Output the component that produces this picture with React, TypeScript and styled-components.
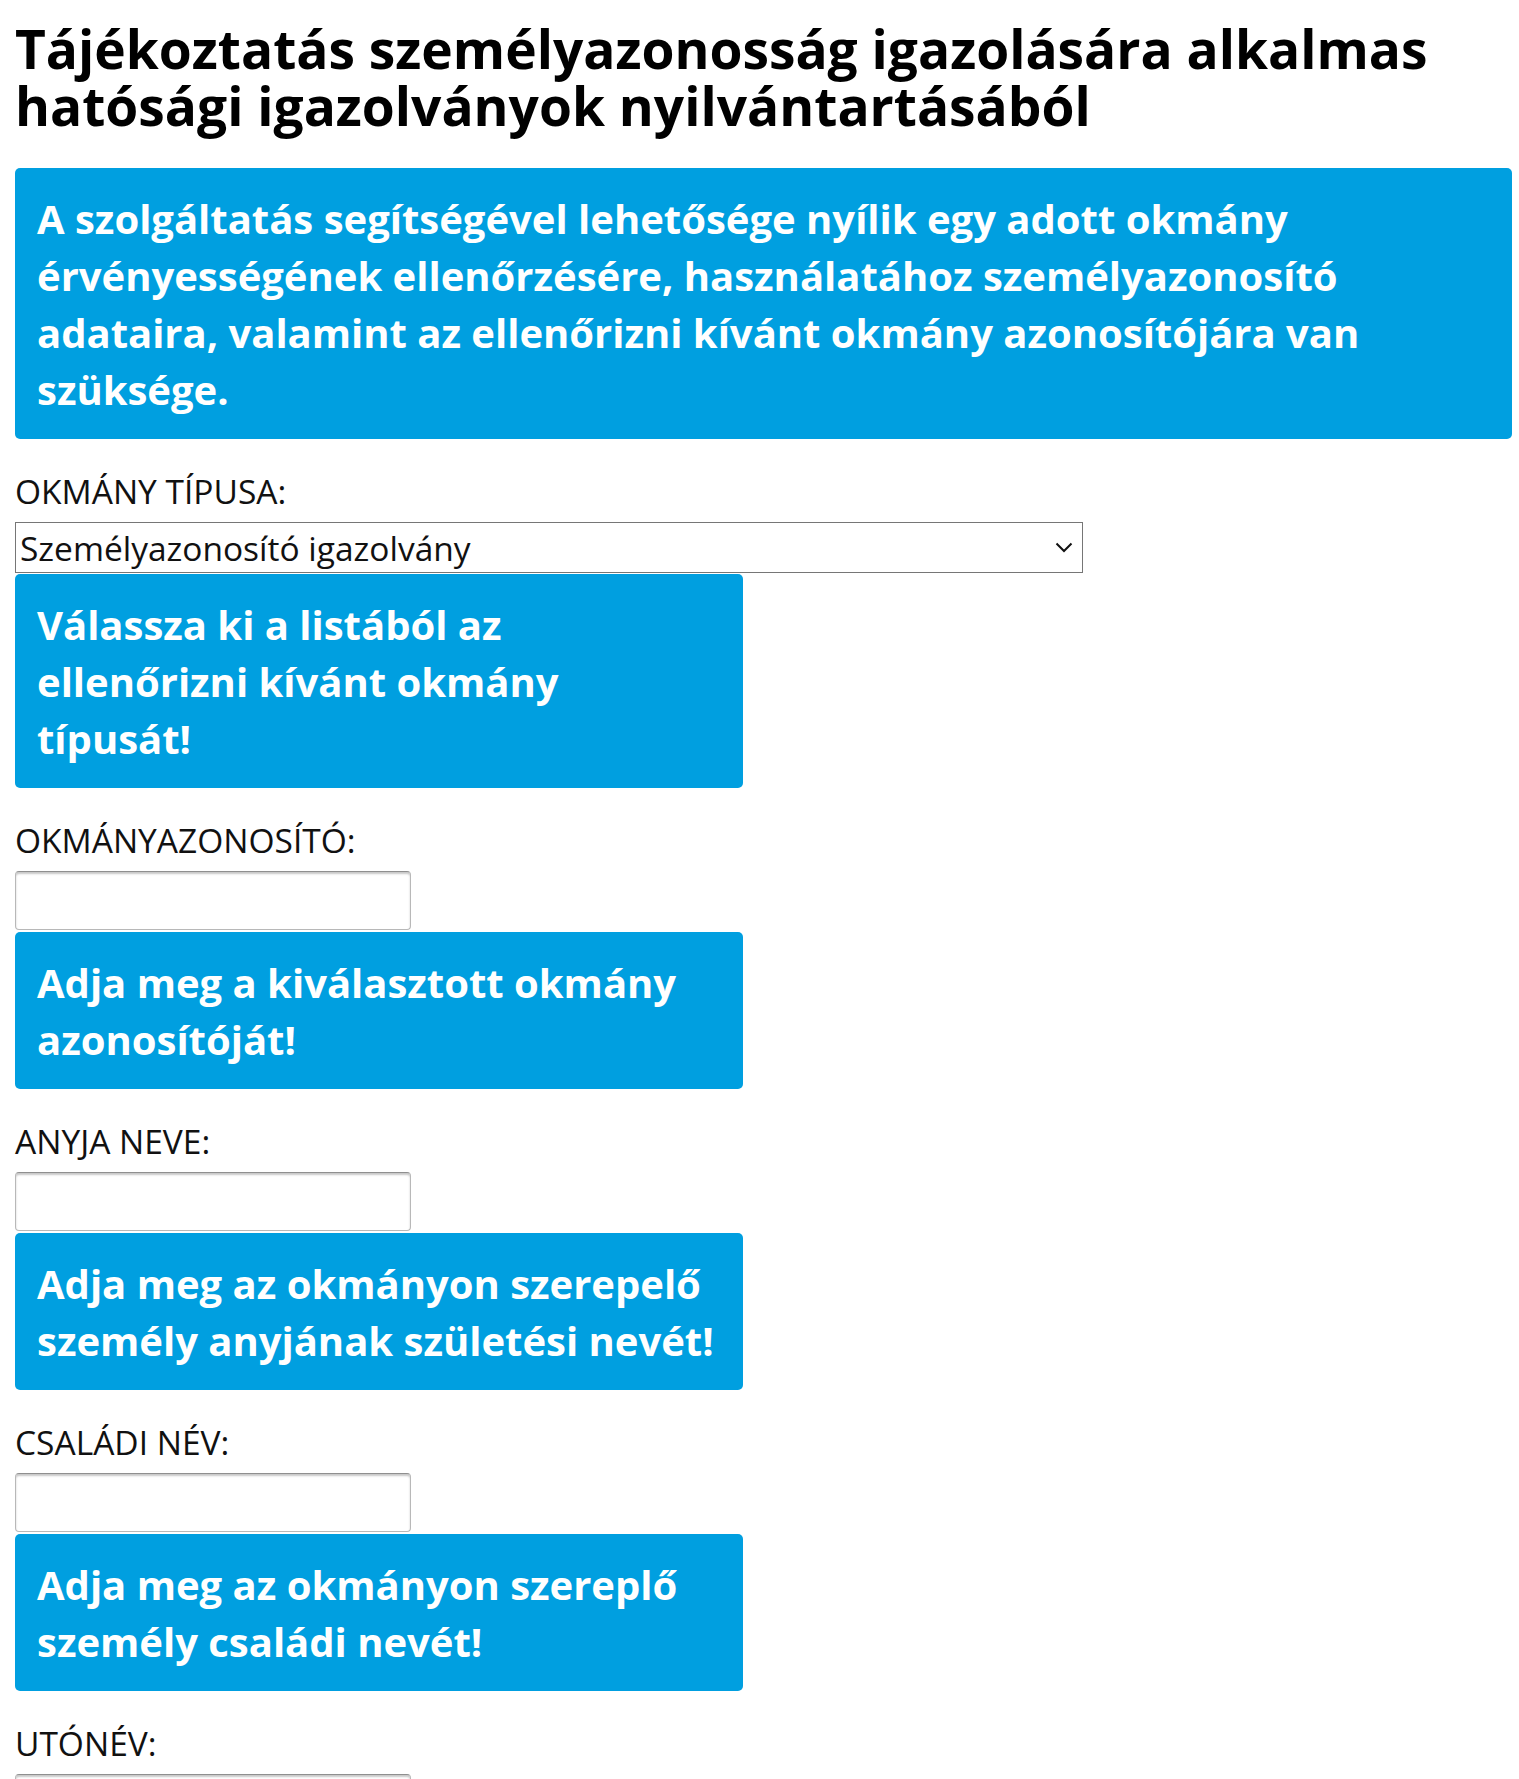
import React from "react";
import styled, { createGlobalStyle } from "styled-components";

const GlobalStyle = createGlobalStyle`
  html, body {
    margin: 0;
    padding: 0;
    background: #ffffff;
  }
  body {
    font-family: "Open Sans", "Liberation Sans", Arial, sans-serif;
    color: #111111;
  }
  * { box-sizing: border-box; }
`;

const Page = styled.main`
  padding: 20px 7px 0 15px;
`;

const Title = styled.h1`
  margin: 0 0 34px;
  font-size: 53.3px;
  line-height: 57px;
  font-weight: 700;
  color: #000000;
`;

const InfoBox = styled.div<{ $wide?: boolean }>`
  width: ${(p) => (p.$wide ? "100%" : "728px")};
  background: #009fe0;
  color: #ffffff;
  border-radius: 5px;
  padding: 22px 25px 21px 22px;
  font-size: 40px;
  line-height: 57px;
  font-weight: 700;
`;

const Field = styled.div`
  display: flex;
  flex-direction: column;
  align-items: flex-start;
`;

const Label = styled.label`
  display: block;
  margin: 29px 0 8px;
  font-size: 33.5px;
  line-height: 46px;
  font-weight: 400;
  color: #111111;
  text-transform: uppercase;
`;

const SelectWrap = styled.div`
  position: relative;
  width: 1068px;
  height: 51px;
  margin-bottom: 1px;
`;

const Select = styled.select`
  appearance: none;
  -webkit-appearance: none;
  width: 100%;
  height: 100%;
  border: 1px solid #767676;
  border-radius: 0;
  background: #ffffff;
  padding: 0 40px 0 4px;
  font-family: "Open Sans", "Liberation Sans", Arial, sans-serif;
  font-size: 33.5px;
  color: #111111;
`;

const Chevron = styled.svg`
  position: absolute;
  right: 10px;
  top: 20px;
  width: 18px;
  height: 11px;
  pointer-events: none;
`;

const TextInput = styled.input`
  width: 396px;
  height: 59px;
  margin-bottom: 2px;
  border: 1px solid #b8b8b8;
  border-top-color: #8f8f8f;
  border-radius: 4px;
  box-shadow: inset 0 2px 2px rgba(0, 0, 0, 0.22);
  background: #ffffff;
  font-family: "Open Sans", "Liberation Sans", Arial, sans-serif;
  font-size: 33.5px;
  padding: 0 6px;
`;

const fields = [
  {
    label: "Okmányazonosító:",
    hint: "Adja meg a kiválasztott okmány azonosítóját!",
  },
  {
    label: "Anyja neve:",
    hint: "Adja meg az okmányon szerepelő személy anyjának születési nevét!",
  },
  {
    label: "Családi név:",
    hint: "Adja meg az okmányon szereplő személy családi nevét!",
  },
];

export default function App() {
  return (
    <>
      <GlobalStyle />
      <Page>
        <Title>
          Tájékoztatás személyazonosság igazolására alkalmas hatósági
          igazolványok nyilvántartásából
        </Title>
        <InfoBox $wide>
          A szolgáltatás segítségével lehetősége nyílik egy adott okmány
          érvényességének ellenőrzésére, használatához személyazonosító
          adataira, valamint az ellenőrizni kívánt okmány azonosítójára van
          szüksége.
        </InfoBox>

        <Field>
          <Label htmlFor="tipus">Okmány típusa:</Label>
          <SelectWrap>
            <Select id="tipus" defaultValue="szig">
              <option value="szig">Személyazonosító igazolvány</option>
              <option value="utlevel">Útlevél</option>
              <option value="jogositvany">Vezetői engedély</option>
            </Select>
            <Chevron viewBox="0 0 18 11" aria-hidden="true">
              <path
                d="M1.5 1.5 L9 9 L16.5 1.5"
                fill="none"
                stroke="#111"
                strokeWidth="2"
              />
            </Chevron>
          </SelectWrap>
          <InfoBox>Válassza ki a listából az ellenőrizni kívánt okmány típusát!</InfoBox>
        </Field>

        {fields.map((f, i) => (
          <Field key={i}>
            <Label htmlFor={`f${i}`}>{f.label}</Label>
            <TextInput id={`f${i}`} type="text" />
            <InfoBox>{f.hint}</InfoBox>
          </Field>
        ))}

        <Field>
          <Label htmlFor="uto">Utónév:</Label>
          <TextInput id="uto" type="text" />
        </Field>
      </Page>
    </>
  );
}
